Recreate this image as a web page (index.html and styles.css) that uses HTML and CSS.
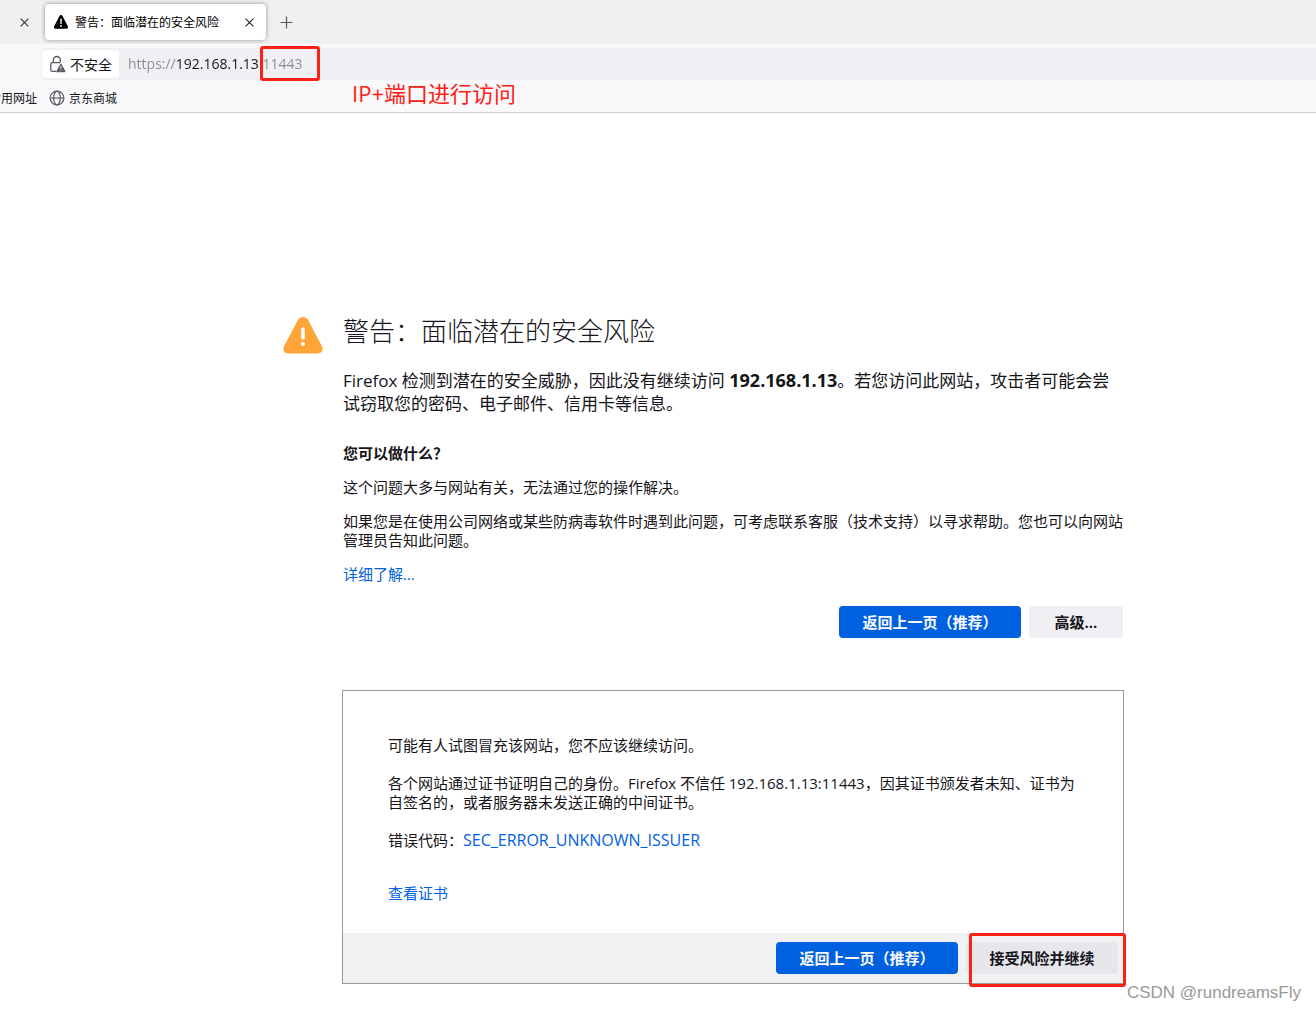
FILE: index.html
```html
<!DOCTYPE html>
<html lang="zh-CN">
<head>
<meta charset="utf-8">
<meta name="viewport" content="width=device-width, initial-scale=1">
<title>警告：面临潜在的安全风险</title>
<link rel="stylesheet" href="styles.css">
</head>
<body>
<header class="browser">
  <div class="tab-strip">
    <button class="icon-button" type="button" aria-label="关闭">
      <svg width="9" height="9" viewBox="0 0 9 9" fill="none" stroke="#333" stroke-width="1.1"><path d="M.6.6l7.8 7.8M8.4.6L.6 8.4"/></svg>
    </button>
    <div class="tab">
      <svg width="16" height="16" viewBox="0 0 16 16"><path d="M8 1c.7 0 1.200.3 1.500.9l5.300 10.300c.6 1.200-.1 2.600-1.500 2.600H2.700c-1.400 0-2.100-1.400-1.500-2.600L6.500 1.900C6.800 1.300 7.300 1 8 1z"/><path d="M8 5.200v4.200" stroke="#fff" stroke-width="1.400" stroke-linecap="round"/><circle cx="8" cy="12" r=".9" fill="#fff"/></svg>
      <span class="tab-title">警告：面临潜在的安全风险</span>
      <button class="icon-button" type="button" aria-label="关闭标签页">
        <svg width="9" height="9" viewBox="0 0 9 9" fill="none" stroke="#222" stroke-width="1.100"><path d="M.6.6l7.800 7.800M8.400.6L.6 8.400"/></svg>
      </button>
    </div>
    <button class="icon-button" type="button" aria-label="打开新标签页">
      <svg width="13" height="13" viewBox="0 0 13 13" fill="none" stroke="#555" stroke-width="1.200"><path d="M6.500.5v12M.5 6.500h12"/></svg>
    </button>
  </div>
  <div class="url-bar">
    <button class="identity" type="button">
      <svg width="18" height="18" viewBox="0 0 18 18" fill="none" stroke="#5b5b66" stroke-width="1.300"><path d="M4.300 7.600V5a3.500 3.500 0 0 1 7 0v2.600M7 16.300H3.300A1.500 1.500 0 0 1 1.800 14.800V9.200A1.500 1.500 0 0 1 3.300 7.700h7.900"/><path d="M11.900 9.300l4 7.200H7.900z" fill="#5b5b66" stroke-linejoin="round"/><path d="M11.900 11.200v2.600m0 1v1" stroke="#fff" stroke-width="1"/></svg>
      不安全
    </button>
    <div class="address">
      <input class="address-input" type="text" aria-label="网址" value="https://192.168.1.13:11443">
      <span class="mark mark-port"></span>
    </div>
  </div>
  <nav class="bookmarks">
    <a class="bookmark bookmark-cut" href="#">常用网址</a>
    <a class="bookmark" href="#">
      <svg width="16" height="16" viewBox="0 0 16 16" fill="none" stroke="#5b5b66" stroke-width="1.200"><circle cx="8" cy="8" r="6.900"/><ellipse cx="8" cy="8" rx="3.300" ry="6.900"/><path d="M1.100 8h13.800"/></svg>
      京东商城
    </a>
    <span class="note">IP+端口进行访问</span>
  </nav>
</header>
<main class="page">
  <svg class="warning" width="40" height="38" viewBox="0 0 40 38"><path d="M20 1c2.300 0 4 1 5.100 3l13.800 26.300c2 3.700-.2 7.200-4.300 7.200H5.400c-4.100 0-6.300-3.500-4.300-7.200L14.900 4C16 2 17.700 1 20 1z" fill="#ffa436"/><path d="M20 13v9" stroke="#fff" stroke-width="3.600" stroke-linecap="round"/><circle cx="20" cy="28" r="2.100" fill="#fff"/></svg>
  <div class="content">
    <h1>警告：面临潜在的安全风险</h1>
    <p class="intro">Firefox 检测到潜在的安全威胁，因此没有继续访问 <b>192.168.1.13</b>。若您访问此网站，攻击者可能会尝试窃取您的密码、电子邮件、信用卡等信息。</p>
    <h2>您可以做什么？</h2>
    <p>这个问题大多与网站有关，无法通过您的操作解决。</p>
    <p>如果您是在使用公司网络或某些防病毒软件时遇到此问题，可考虑联系客服（技术支持）以寻求帮助。您也可以向网站管理员告知此问题。</p>
    <p><a href="#">详细了解…</a></p>
    <div class="actions">
      <button class="button button-primary" type="button">返回上一页（推荐）</button>
      <button class="button" type="button">高级…</button>
    </div>
    <section class="panel">
      <div class="panel-body">
        <p>可能有人试图冒充该网站，您不应该继续访问。</p>
        <p>各个网站通过证书证明自己的身份。Firefox 不信任 192.168.1.13:11443，因其证书颁发者未知、证书为自签名的，或者服务器未发送正确的中间证书。</p>
        <p>错误代码：<a class="error-code" href="#">SEC_ERROR_UNKNOWN_ISSUER</a></p>
        <p class="certificate"><a href="#">查看证书</a></p>
      </div>
      <div class="panel-footer">
        <button class="button button-primary" type="button">返回上一页（推荐）</button>
        <div class="accept">
          <button class="button button-accept" type="button">接受风险并继续</button>
          <span class="mark mark-accept"></span>
        </div>
      </div>
    </section>
  </div>
</main>
<div class="watermark">CSDN @rundreamsFly</div>
</body>
</html>
```
FILE: styles.css
```css
* {
  box-sizing: border-box;
}

body {
  margin: 0;
  background: #fff;
  color: #15141a;
  font: 15px/19px "Open Sans", "Noto Sans CJK SC", sans-serif;
}

button,
input {
  font: inherit;
  color: inherit;
  border: 0;
  background: none;
  padding: 0;
}

a {
  color: #0061e0;
  text-decoration: none;
}

svg {
  display: block;
  flex: none;
}

/* Browser chrome */
.browser {
  background: #f9f9fb;
  border-bottom: 1px solid #ccc;
  font-size: 12px;
}

.tab-strip {
  display: flex;
  align-items: center;
  gap: 12px;
  height: 44px;
  padding-left: 16px;
  background: #f0f0f0;
}

.icon-button {
  display: grid;
  place-items: center;
  width: 17px;
  height: 17px;
}

.tab {
  display: flex;
  align-items: center;
  gap: 6px;
  width: 221px;
  height: 36px;
  padding: 0 8px;
  border-radius: 4px;
  background: #fff;
  box-shadow: 0 0 4px rgba(0, 0, 0, 0.4);
  color: #000;
}

.tab-title {
  flex: 1;
  white-space: nowrap;
}

.url-bar {
  display: flex;
  align-items: center;
  height: 32px;
  margin: 4px 0 0 41px;
  padding-left: 1px;
  border-radius: 4px 0 0 4px;
  background: #f0f0f4;
  font-size: 14px;
}

.identity {
  display: flex;
  align-items: center;
  gap: 3px;
  height: 28px;
  padding: 0 7px;
  border-radius: 3px;
  background: #fff;
}

.address {
  position: relative;
  flex: 1;
  padding-left: 9px;
}

.address-input {
  display: block;
  width: 100%;
  height: 28px;
  padding-bottom: 2px;
  color: transparent;
  caret-color: #15141a;
  background: linear-gradient(90deg, #8a8a90 49px, #15141a 49px 131px, #8a8a90 131px);
  -webkit-background-clip: text;
  background-clip: text;
}

.mark {
  position: absolute;
  border: 3px solid #ff2015;
  border-radius: 3px;
  pointer-events: none;
}

.mark-port {
  left: 141px;
  top: -4px;
  width: 60px;
  height: 35px;
}

.bookmarks {
  display: flex;
  align-items: center;
  height: 32px;
  padding-top: 4px;
}

.bookmark {
  display: flex;
  align-items: center;
  gap: 4px;
  color: #15141a;
}

.bookmark-cut {
  margin: 0 12px 0 -11px;
}

.note {
  margin: -10px 0 0 235px;
  color: #ff2015;
  font-size: 22px;
  line-height: 28px;
}

/* Warning page */
.page {
  display: flex;
  justify-content: center;
  gap: 20px;
  padding: 200px 0 27px 90px;
}

.warning {
  margin-top: 3px;
}

.content {
  flex: 0 1 780px;
  min-width: 0;
}

h1 {
  margin: 0 0 20px;
  font-size: 26px;
  font-weight: 300;
  line-height: 36px;
}

h2 {
  margin: 0;
  font-size: 15px;
  line-height: 19px;
}

p {
  margin: 15px 0 0;
}

.intro {
  margin: 0 0 29px;
  font-size: 17px;
  line-height: 23px;
}

.intro b {
  font-size: 18px;
}

.actions {
  display: flex;
  justify-content: flex-end;
  gap: 8px;
  margin-top: 22px;
}

.button {
  min-width: 94px;
  height: 32px;
  padding: 0 24px;
  border-radius: 4px;
  background: #f0f0f4;
  font-weight: 700;
  white-space: nowrap;
}

.button-primary {
  width: 182px;
  padding: 0;
  background: #0061e0;
  color: #fbfbfe;
}

.button-accept {
  width: 152px;
  padding: 0;
  background: #e6e6eb;
}

.panel {
  margin: 52px -1px 0;
  border: 1px solid #999;
}

.panel-body {
  padding: 45px 45px 30px;
}

.panel-body p {
  margin: 0 0 19px;
}

.error-code {
  font-size: 16px;
}

.panel-body .certificate {
  margin: 34px 0 0;
}

.panel-footer {
  display: flex;
  justify-content: flex-end;
  gap: 8px;
  padding: 9px 5px;
  background: #f1f1f4;
}

.accept {
  position: relative;
}

.mark-accept {
  inset: -9px -8px -13px 3px;
}

.watermark {
  position: absolute;
  right: 15px;
  top: 982px;
  color: #999;
  font: 17px/22px "Liberation Sans", sans-serif;
}
```
